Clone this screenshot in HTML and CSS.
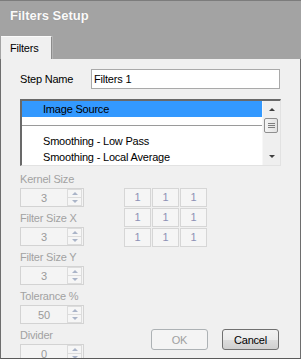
FILE: index.html
```html
<!DOCTYPE html>
<html lang="en">
<head>
    <meta charset="utf-8">
    <title>Filters Setup</title>
    <link rel="stylesheet" href="styles.css">
</head>
<body>
<div class="window">
    <div class="header">
        <div class="title">Filters Setup</div>
        <div class="tab">Filters</div>
    </div>
    <div class="panel">
        <div class="name-row">
            <span class="label">Step Name</span>
            <input type="text" class="text-input" value="Filters 1">
        </div>
        <div class="listbox">
            <ul class="list-items">
                <li class="item selected">Image Source</li>
                <li class="item sep"><div class="sep-line"></div></li>
                <li class="item">Smoothing - Low Pass</li>
                <li class="item">Smoothing - Local Average</li>
            </ul>
            <div class="scrollbar">
                <div class="sb-btn"><span class="tri up"></span></div>
                <div class="thumb"><i></i><i></i><i></i></div>
                <div class="sb-track"></div>
                <div class="sb-btn"><span class="tri down"></span></div>
            </div>
        </div>
        <div class="settings">
            <div class="fields">
                <div class="field">
                    <div class="field-label">Kernel Size</div>
                    <div class="spin"><span class="spin-val">3</span><span class="spin-btns"><b><em class="up"></em></b><b><em class="down"></em></b></span></div>
                </div>
                <div class="field">
                    <div class="field-label">Filter Size X</div>
                    <div class="spin"><span class="spin-val">3</span><span class="spin-btns"><b><em class="up"></em></b><b><em class="down"></em></b></span></div>
                </div>
                <div class="field">
                    <div class="field-label">Filter Size Y</div>
                    <div class="spin"><span class="spin-val">3</span><span class="spin-btns"><b><em class="up"></em></b><b><em class="down"></em></b></span></div>
                </div>
                <div class="field">
                    <div class="field-label">Tolerance %</div>
                    <div class="spin"><span class="spin-val">50</span><span class="spin-btns"><b><em class="up"></em></b><b><em class="down"></em></b></span></div>
                </div>
                <div class="field">
                    <div class="field-label">Divider</div>
                    <div class="spin"><span class="spin-val">0</span><span class="spin-btns"><b><em class="up"></em></b><b><em class="down"></em></b></span></div>
                </div>
            </div>
            <div class="side">
                <div class="matrix">
                    <span class="cell">1</span><span class="cell">1</span><span class="cell">1</span>
                    <span class="cell">1</span><span class="cell">1</span><span class="cell">1</span>
                    <span class="cell">1</span><span class="cell">1</span><span class="cell">1</span>
                </div>
                <div class="buttons">
                    <button class="btn" disabled>OK</button>
                    <button class="btn">Cancel</button>
                </div>
            </div>
        </div>
    </div>
</div>
</body>
</html>
```

FILE: styles.css
```css
html{margin: 0; padding: 0;}
body{margin: 0; padding: 0; overflow: hidden; font-family: "Liberation Sans", Arial, sans-serif; font-size: 11px; letter-spacing: -0.2px; color: #000;}

.window{width: 301px; height: 358px; border-top: 1px solid #7c7c7c; background: #a3a3a3;}

/* title + tab strip */
.header{height: 58px; box-sizing: border-box; padding-top: 7px; display: flex; flex-direction: column;}
.title{padding-left: 10px; height: 16px; line-height: 16px; font-size: 13px; font-weight: bold; letter-spacing: 0; color: #fafafa; text-shadow: 0 0 1px #8a8a8a;}
.tab{margin-top: auto; margin-left: 1px; width: 51px; height: 23px; box-sizing: border-box; padding-left: 9px; line-height: 22px; background: #f0f0f0; border-top: 1px solid #fbfbfb; border-right: 1px solid #8c8c8c; box-shadow: 1px 0 0 #b4b4b4;}

/* content */
.panel{height: 300px; box-sizing: border-box; padding: 10px 19px 0 19px; background: #f0f0f0; border-left: 1px solid #6e6e6e; border-right: 1px solid #6e6e6e; border-bottom: 1px solid #5a5a5a; overflow: hidden;}

.name-row{display: flex; align-items: center; height: 20px;}
.label{width: 71px;}
.text-input{width: 189px; height: 20px; box-sizing: border-box; margin: 0; padding: 0 2px; border: 1px solid #a9a9a9; background: #fff; font-family: inherit; font-size: 11px; letter-spacing: inherit; outline: none;}

.listbox{display: flex; margin-top: 10px; width: 261px; height: 67px; box-sizing: border-box; border-top: 2px solid #696969; border-left: 2px solid #696969; border-right: 1px solid #e2e2e2; border-bottom: 1px solid #e2e2e2; background: #fff;}
.list-items{flex: 1; margin: 0; padding: 0; list-style: none; overflow: hidden;}
.item{height: 16px; line-height: 16px; padding-left: 21px; white-space: nowrap;}
.item.selected{background: #3399ff;}
.sep{padding-left: 0;}
.sep-line{position: relative; top: 8px; border-top: 1px solid #9a9a9a;}

.scrollbar{width: 17px; display: flex; flex-direction: column; background: #efefef; border-left: 1px solid #f7f7f7;}
.sb-btn{height: 17px; display: flex; align-items: center; justify-content: center;}
.sb-track{flex: 1;}
.tri{width: 0; height: 0; border-left: 3px solid transparent; border-right: 3px solid transparent;}
.tri.up{border-bottom: 3px solid #3f3f3f;}
.tri.down{border-top: 3px solid #3f3f3f;}
.thumb{height: 15px; margin: 0 2px 0 1px; box-sizing: border-box; border: 1px solid #8f8f8f; border-radius: 2px; background: linear-gradient(to right, #f4f4f4, #e2e2e2); display: flex; flex-direction: column; justify-content: center; align-items: center; gap: 1px;}
.thumb i{display: block; width: 7px; height: 1px; background: #7e7e7e;}

.settings{display: flex; margin-top: 6px;}
.fields{width: 64px;}
.field{margin-bottom: 4px;}
.field-label{line-height: 14px; margin-bottom: 2px; color: #a2a2a2; white-space: nowrap;}
.spin{display: flex; align-items: center; height: 19px; box-sizing: border-box; border: 1px solid #d3d3d3; background: #f4f4f4;}
.spin-val{flex: 1; text-align: center; color: #9a9a9a;}
.spin-btns{display: flex; flex-direction: column; width: 15px; height: 17px; margin-right: 1px;}
.spin-btns b{flex: 1; display: flex; align-items: center; justify-content: center; border: 1px solid #dcdcdc; background: #f6f6f6;}
.spin-btns b + b{border-top: 0;}
.spin-btns em{width: 0; height: 0; border-left: 3px solid transparent; border-right: 3px solid transparent;}
.spin-btns em.up{border-bottom: 3px solid #aab4c8;}
.spin-btns em.down{border-top: 3px solid #aab4c8;}

.side{flex: 1; margin-left: 40px; display: flex; flex-direction: column;}
.matrix{margin-top: 16px; display: grid; grid-template-columns: repeat(3, 27px); grid-auto-rows: 19px; gap: 1px;}
.cell{box-sizing: border-box; border: 1px solid #d6d6d6; background: #f5f5f5; color: #8e92b5; text-align: center; line-height: 17px;}

.buttons{margin-top: 82px; display: flex; justify-content: flex-end; gap: 14px; padding-right: 2px;}
.btn{width: 57px; height: 21px; margin: 0; padding: 0; box-sizing: border-box; border: 1px solid #707070; border-radius: 3px; background: linear-gradient(#f2f2f2, #ebebeb 50%, #dddddd 50%, #cfcfcf); font-family: inherit; font-size: 11px; letter-spacing: inherit; color: #000;}
.btn:disabled{border-color: #adb2b5; background: #f4f4f4; color: #a0a0a0;}
```
